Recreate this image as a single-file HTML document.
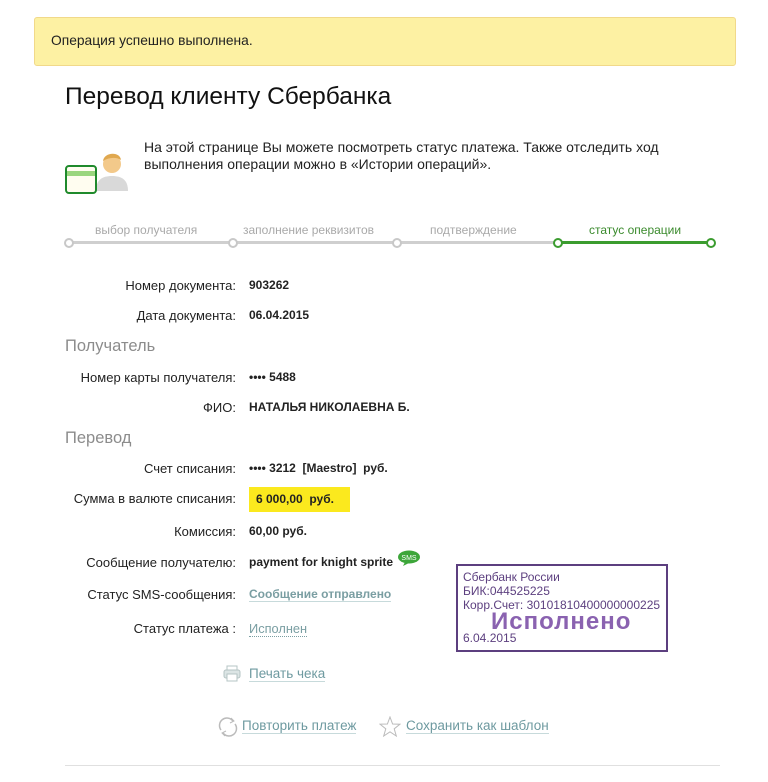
<!DOCTYPE html>
<html><head><meta charset="utf-8"><style>
body{margin:0;width:768px;height:782px;background:#fff;font-family:"Liberation Sans",sans-serif;position:relative;overflow:hidden;color:#222}
.a{position:absolute;white-space:nowrap}
.lbl{position:absolute;right:532px;font-size:13px;color:#222;white-space:nowrap}
.val{position:absolute;left:249px;font-size:12px;font-weight:bold;color:#222;white-space:nowrap}
.h{position:absolute;left:65px;font-size:16.5px;color:#8c8c8c}
.step{position:absolute;top:223px;font-size:12px;color:#a9a9a9}
.dot{position:absolute;width:6px;height:6px;border:2px solid #c8c8c8;border-radius:50%;background:#fff;top:238px}
.lnk{color:#6e9aa0;border-bottom:1px solid #c7dadb}
</style></head><body>
<div class="a" style="left:34px;top:17px;width:700px;height:47px;background:#fdf1a3;border:1px solid #f1d98a;border-radius:3px"></div>
<div class="a" style="left:51px;top:33px;font-size:13.8px;color:#222">Операция успешно выполнена.</div>
<div class="a" style="left:65px;top:83px;font-size:24.5px;color:#111">Перевод клиенту Сбербанка</div>

<svg class="a" style="left:62px;top:146px" width="70" height="50" viewBox="0 0 70 50">
<path d="M34 45 C34 34 40 30 50 30 C60 30 66 34 66 45 Z" fill="#d9d9d9"/>
<circle cx="50" cy="18" r="9" fill="#f3c98a"/>
<path d="M41 15 C42 6 58 5 59 14 C55 11 47 11 41 15Z" fill="#e0a84f"/>
<rect x="4" y="20" width="30" height="27" rx="3" fill="#fffdf0" stroke="#1f8a2c" stroke-width="2"/>
<rect x="5" y="25" width="28" height="5" fill="#9ad67e"/>
</svg>
<div class="a" style="left:144px;top:139px;font-size:14px;line-height:17px;color:#222">На этой странице Вы можете посмотреть статус платежа. Также отследить ход<br>выполнения операции можно в «Истории операций».</div>

<div class="a" style="left:68px;top:241px;width:490px;height:3px;background:#cfcfcf"></div>
<div class="a" style="left:558px;top:241px;width:154px;height:3px;background:#3b9c2f"></div>
<div class="dot" style="left:64px"></div>
<div class="dot" style="left:228px"></div>
<div class="dot" style="left:392px"></div>
<div class="dot" style="left:553px;border-color:#3b9c2f"></div>
<div class="dot" style="left:706px;border-color:#3b9c2f"></div>
<div class="step" style="left:95px">выбор получателя</div>
<div class="step" style="left:243px">заполнение реквизитов</div>
<div class="step" style="left:430px">подтверждение</div>
<div class="step" style="left:589px;color:#3a8a2c">статус операции</div>

<div class="lbl" style="top:278px">Номер документа:</div><div class="val" style="top:278px">903262</div>
<div class="lbl" style="top:308px">Дата документа:</div><div class="val" style="top:308px">06.04.2015</div>
<div class="h" style="top:337px">Получатель</div>
<div class="lbl" style="top:370px">Номер карты получателя:</div><div class="val" style="top:370px">•••• 5488</div>
<div class="lbl" style="top:400px">ФИО:</div><div class="val" style="top:400px">НАТАЛЬЯ НИКОЛАЕВНА Б.</div>
<div class="h" style="top:429px">Перевод</div>
<div class="lbl" style="top:461px">Счет списания:</div><div class="val" style="top:461px">•••• 3212&nbsp; [Maestro]&nbsp; руб.</div>
<div class="a" style="left:249px;top:487px;width:101px;height:25px;background:#fbe91e"></div>
<div class="lbl" style="top:491px">Сумма в валюте списания:</div><div class="val" style="top:492px;left:256px">6 000,00&nbsp; руб.</div>
<div class="lbl" style="top:524px">Комиссия:</div><div class="val" style="top:524px">60,00 руб.</div>
<div class="lbl" style="top:555px">Сообщение получателю:</div><div class="val" style="top:555px">payment for knight sprite</div>
<svg class="a" style="left:397px;top:550px" width="24" height="16"><ellipse cx="12" cy="7" rx="11" ry="6.5" fill="#3da63a"/><path d="M8 12 L6 16 L12 13Z" fill="#3da63a"/><text x="12" y="10" font-size="7" font-family="Liberation Sans" fill="#fff" text-anchor="middle">SMS</text></svg>
<div class="lbl" style="top:587px">Статус SMS-сообщения:</div><div class="val" style="top:587px"><span class="lnk" style="color:#7a9ea2">Сообщение отправлено</span></div>
<div class="lbl" style="top:621px">Статус платежа :</div><div class="a" style="left:249px;top:621px;font-size:12.8px;color:#7a9ea2;border-bottom:1px dotted #7a9ea2">Исполнен</div>

<div class="a" style="left:456px;top:564px;width:208px;height:84px;border:2px solid #5c3f7f"></div>
<div class="a" style="left:463px;top:570px;font-size:12px;line-height:14px;color:#5c3f7f">Сбербанк России<br>БИК:044525225<br>Корр.Счет: 30101810400000000225</div>
<div class="a" style="left:491px;top:608px;font-size:24px;font-weight:bold;color:#8a62b0;letter-spacing:1px">Исполнено</div>
<div class="a" style="left:463px;top:631px;font-size:12px;color:#5c3f7f">6.04.2015</div>

<svg class="a" style="left:223px;top:665px" width="18" height="17"><rect x="4" y="1" width="10" height="5" fill="none" stroke="#b5c4c4"/><rect x="1" y="5" width="16" height="8" rx="2" fill="#dce5e5" stroke="#b5c4c4"/><rect x="4" y="9" width="10" height="7" fill="#fff" stroke="#b5c4c4"/></svg>
<div class="a" style="left:249px;top:666px;font-size:13.5px" ><span class="lnk">Печать чека</span></div>

<svg class="a" style="left:218px;top:716px" width="20" height="22"><path d="M15 5 A7.5 7.5 0 0 0 3 14" fill="none" stroke="#bbb" stroke-width="1.5"/><path d="M5 17 A7.5 7.5 0 0 0 17 8" fill="none" stroke="#bbb" stroke-width="1.5"/><path d="M13 2 L16 5 L12 7" fill="none" stroke="#bbb"/><path d="M7 20 L4 17 L8 15" fill="none" stroke="#bbb"/></svg>
<div class="a" style="left:242px;top:718px;font-size:13.5px"><span class="lnk">Повторить платеж</span></div>
<svg class="a" style="left:379px;top:716px" width="22" height="21"><path d="M11 1 L13.6 8 L21 8.2 L15.2 12.8 L17.3 20 L11 15.8 L4.7 20 L6.8 12.8 L1 8.2 L8.4 8Z" fill="none" stroke="#bbb"/></svg>
<div class="a" style="left:406px;top:718px;font-size:13.5px"><span class="lnk">Сохранить как шаблон</span></div>

<div class="a" style="left:65px;top:765px;width:655px;height:1px;background:#e0e0e0"></div>
</body></html>
